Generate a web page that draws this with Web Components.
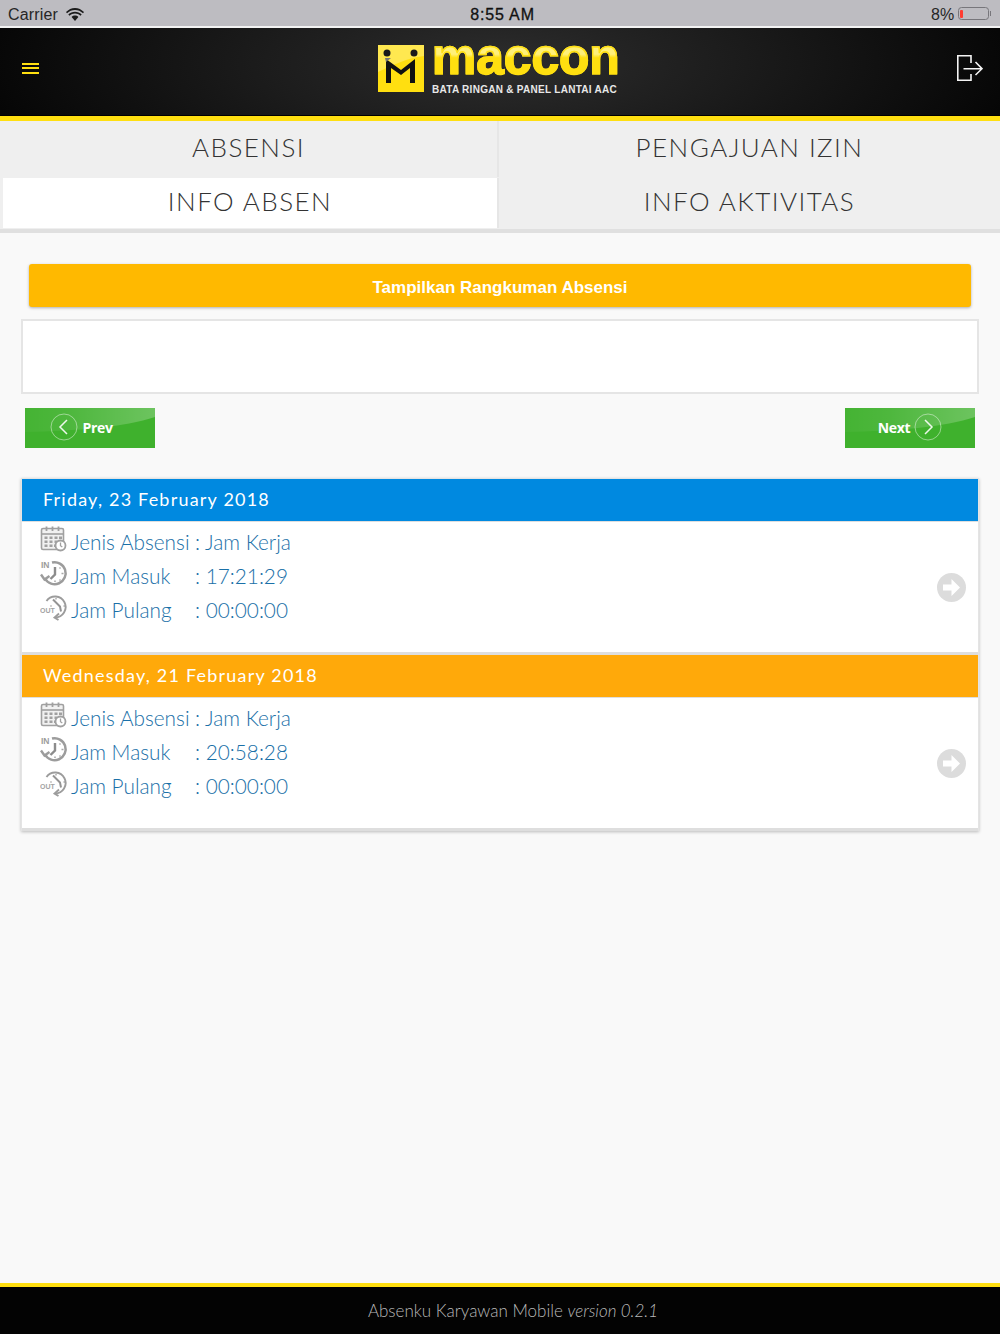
<!DOCTYPE html>
<html>
<head>
<meta charset="utf-8">
<title>Absenku</title>
<style>
html,body{margin:0;padding:0;height:100%;}
body{font-family:"Lato","Liberation Sans",sans-serif;background:#f9f9f9;}
#app{display:flex;flex-direction:column;height:1334px;overflow:hidden;}
</style>
</head>
<body>
<div id="app">
    <app-statusbar></app-statusbar>
    <app-header></app-header>
    <tab-grid>
        <tab-item>ABSENSI</tab-item>
        <tab-item>PENGAJUAN IZIN</tab-item>
        <tab-item active>INFO ABSEN</tab-item>
        <tab-item>INFO AKTIVITAS</tab-item>
    </tab-grid>
    <app-main>
        <action-button>Tampilkan Rangkuman Absensi</action-button>
        <summary-box></summary-box>
        <pager-bar>
            <pager-button dir="prev">Prev</pager-button>
            <pager-button dir="next">Next</pager-button>
        </pager-bar>
        <card-list>
            <absen-card date="Friday, 23 February 2018" color="#0089e0" type="Jam Kerja" masuk="17:21:29" pulang="00:00:00"></absen-card>
            <absen-card date="Wednesday, 21 February 2018" color="#ffa90a" type="Jam Kerja" masuk="20:58:28" pulang="00:00:00"></absen-card>
        </card-list>
    </app-main>
    <app-footer>Absenku Karyawan Mobile <em>version 0.2.1</em></app-footer>
</div>

<script>
const icons = {
    calendar: `<svg width="28" height="28" viewBox="0 0 28 28" fill="none" stroke="#a0a0a0">
        <rect x="1.500" y="3.500" width="22" height="21" rx="1.500" fill="#f1f1f1" stroke-width="1.600"/>
        <path d="M1.500 9H23.500" stroke-width="1.600"/>
        <path d="M6.500 1.500V6M12.500 1.500V6M18.500 1.500V6" stroke-width="1.800"/>
        <path d="M4.500 11.500h3v2.500h-3zM9.500 11.500h3v2.500h-3zM14.500 11.500h3v2.500h-3zM19 11.500h3v2.500h-3zM4.500 15.500h3v2.500h-3zM9.500 15.500h3v2.500h-3zM14.500 15.500h3v2.500h-3zM4.500 19.500h3v2.500h-3zM9.500 19.500h3v2.500h-3zM14 19.500h2v2.500h-2z" fill="#a0a0a0" stroke="none"/>
        <circle cx="20.500" cy="20.500" r="5" fill="#fff" stroke-width="1.800"/>
        <path d="M20.500 17.500V20.700L22.300 22" stroke-width="1.300"/>
    </svg>`,
    clockin: `<svg width="28" height="28" viewBox="0 0 28 28" fill="none">
        <text x="1" y="9" font-family="Liberation Sans" font-weight="700" font-size="8.500" fill="#9c9c9c">IN</text>
        <path d="M12 3.500A11 11 0 1 1 5 19.500" stroke="#9c9c9c" stroke-width="2.500"/>
        <path d="M1 15.500L4.500 20.500L9.500 17" stroke="#9c9c9c" stroke-width="2.400"/>
        <path d="M15 8V15.500L10.500 20" stroke="#8c8c8c" stroke-width="2.400"/>
        <path d="M21.500 14.500h2M19.500 20.500l1 1M15 21.500v1.500M20.500 8.500l-1 1" stroke="#a6a6a6" stroke-width="1.500"/>
    </svg>`,
    clockout: `<svg width="28" height="28" viewBox="0 0 28 28" fill="none">
        <path d="M6.500 8A10.500 10.500 0 1 1 15 24.500" stroke="#9c9c9c" stroke-width="1.900"/>
        <path d="M19 20.500L14.500 24.500L18.500 27" stroke="#9c9c9c" stroke-width="1.900"/>
        <path d="M13 6.500L20 13.500L21 18.500" stroke="#949494" stroke-width="2"/>
        <path d="M16 5v1.500M23.500 13h1.500M10.500 12.500l1 1" stroke="#a6a6a6" stroke-width="1.400"/>
        <text x="0" y="20" font-family="Liberation Sans" font-weight="700" font-size="7" fill="#a3a3a3">OUT</text>
    </svg>`
};

class AppStatusbar extends HTMLElement {
    constructor() {
        super();
        const shadowRoot = this.attachShadow({ mode: 'open' });
        shadowRoot.innerHTML = `
        <style>
        :host{
            display:grid;
            grid-template-columns:1fr auto 1fr;
            align-items:center;
            height:23px;
            padding:3px 9px 0 8px;
            background:#bdbcc1;
            border-bottom:2px solid #f2f2f2;
            font-family:"Liberation Sans",Arial,sans-serif;
            font-size:16px;
            letter-spacing:.15px;
            color:#262626;
            box-sizing:content-box;
        }
        .left{display:flex;align-items:center;gap:8px;}
        .time{color:#111;-webkit-text-stroke:.3px #111;letter-spacing:.85px;position:relative;left:3px;}
        .right{display:flex;align-items:center;justify-content:flex-end;gap:3px;}
        .batt{display:flex;align-items:center;gap:1px;position:relative;top:-1px;}
        .shell{width:26px;height:8px;border:1.500px solid #77767b;border-radius:3.500px;padding:1.500px;box-sizing:content-box;}
        .level{width:2.500px;height:100%;background:#ff3b30;border-radius:1px;}
        .nub{width:1.500px;height:5px;background:#77767b;}
        </style>
        <div class="left">
            <span>Carrier</span>
            <svg width="18" height="13" viewBox="0 0 18 13" fill="#1c1c1c">
                <path d="M9 2C6 2 3.200 3.200 1 5.300L0 4.100C2.400 1.600 5.600 0 9 0s6.600 1.600 9 4.100l-1 1.200C14.800 3.200 12 2 9 2z"/>
                <path d="M9 5.500C7 5.500 5 6.300 3.500 7.700L2.300 6.400C4.200 4.700 6.500 3.700 9 3.700s4.800 1 6.700 2.700l-1.200 1.300C13 6.300 11 5.500 9 5.500z"/>
                <path d="M9 7.500c1.300 0 2.500.5 3.400 1.400L9 13 5.600 8.900C6.500 8 7.700 7.500 9 7.500z"/>
            </svg>
        </div>
        <div class="time">8:55 AM</div>
        <div class="right">
            <span>8%</span>
            <div class="batt"><div class="shell"><div class="level"></div></div><div class="nub"></div></div>
        </div>
        `
    }
}
customElements.define('app-statusbar', AppStatusbar);

class AppHeader extends HTMLElement {
    constructor() {
        super();
        const shadowRoot = this.attachShadow({ mode: 'open' });
        shadowRoot.innerHTML = `
        <style>
        :host{
            display:flex;
            align-items:center;
            justify-content:space-between;
            height:80px;
            padding:0 17px 8px 22px;
            background:radial-gradient(ellipse 520px 170px at 50% 40%,#2d2d2d 0%,#1c1c1c 45%,#060606 100%);
            border-bottom:5px solid #ffdf10;
            box-shadow:inset 0 -1px 0 #000;
        }
        .menu{display:flex;flex-direction:column;gap:2.500px;width:17px;}
        .menu i{display:block;height:2px;background:#ffdf10;}
        .logo{display:flex;align-items:flex-start;gap:8px;margin:4px 0 0;}
        .mark{display:block;}
        .words{display:flex;flex-direction:column;align-items:flex-start;width:186px;}
        .name{
            font-family:"Liberation Sans",Arial,sans-serif;
            font-weight:700;
            font-size:52px;
            line-height:36px;
            height:36px;
            margin-top:-7px;
            -webkit-text-stroke:1.500px #ffdf10;
            color:transparent;
            background:linear-gradient(#fff07a 0,#fff07a 45%,#ffdf10 55%);
            -webkit-background-clip:text;
            background-clip:text;
            transform:scaleX(.955);
            transform-origin:0 0;
            white-space:nowrap;
        }
        .tag{
            font-family:"Liberation Sans",Arial,sans-serif;
            font-weight:700;
            font-size:10px;
            letter-spacing:.28px;
            color:#e8e8e8;
            margin-top:9.500px;
            white-space:nowrap;
        }
        </style>
        <div class="menu"><i></i><i></i><i></i></div>
        <div class="logo">
            <svg class="mark" width="46" height="47" viewBox="0 0 46 47">
                <rect width="46" height="47" fill="#ffdf10"/>
                <path d="M0 0H46V11C30 13 14 20 0 27z" fill="#ffe850"/>
                <circle cx="9" cy="8" r="3.500" fill="#1a1a1a"/>
                <circle cx="36" cy="8" r="3.500" fill="#1a1a1a"/>
                <path d="M8 38V14L23 25L37 14V38H32V23L23 30L13 23V38z" fill="#111"/>
                <path d="M7 13H13L8 17z" fill="#777"/>
            </svg>
            <div class="words">
                <div class="name">maccon</div>
                <div class="tag">BATA RINGAN &amp; PANEL LANTAI AAC</div>
            </div>
        </div>
        <svg width="26" height="26" viewBox="0 0 26 26" fill="none" stroke="#f4f4f4" stroke-width="1.600">
            <path d="M14 8V.8H.8V25.200H14V19"/>
            <path d="M6.500 13.700H25M18.500 7L25 13.700L18.500 20"/>
        </svg>
        `
    }
}
customElements.define('app-header', AppHeader);

class TabGrid extends HTMLElement {
    constructor() {
        super();
        const shadowRoot = this.attachShadow({ mode: 'open' });
        shadowRoot.innerHTML = `
        <style>
        :host{
            display:grid;
            grid-template-columns:499px 501px;
            grid-template-rows:56px 52px;
            background:#efefef;
            border-bottom:4px solid #e0e0e0;
            height:108px;
        }
        </style>
        <slot></slot>
        `
    }
}
customElements.define('tab-grid', TabGrid);

class TabItem extends HTMLElement {
    constructor() {
        super();
        const shadowRoot = this.attachShadow({ mode: 'open' });
        shadowRoot.innerHTML = `
        <style>
        :host{
            display:flex;
            align-items:center;
            justify-content:center;
            padding-bottom:4px;
            font-family:"Lato",sans-serif;
            font-weight:300;
            font-size:26px;
            letter-spacing:1.450px;
            color:#333;
            background:#efefef;
            box-sizing:border-box;
        }
        :host(:nth-child(odd)){
            border-right:2px solid #e6e6e6;
        }
        :host([active]){
            background:#fff;
            margin-left:3px;
            margin-top:1px;
            margin-bottom:1px;
            padding-bottom:5px;
        }
        </style>
        <slot></slot>
        `
    }
}
customElements.define('tab-item', TabItem);

class AppMain extends HTMLElement {
    constructor() {
        super();
        const shadowRoot = this.attachShadow({ mode: 'open' });
        shadowRoot.innerHTML = `
        <style>
        :host{
            display:flex;
            flex-direction:column;
            flex:1;
            padding:31px 21px 0;
            background:#f9f9f9;
            min-height:0;
        }
        </style>
        <slot></slot>
        `
    }
}
customElements.define('app-main', AppMain);

class ActionButton extends HTMLElement {
    constructor() {
        super();
        const shadowRoot = this.attachShadow({ mode: 'open' });
        shadowRoot.innerHTML = `
        <style>
        :host{
            display:flex;
            align-items:center;
            justify-content:center;
            height:43px;
            box-sizing:border-box;
            padding-top:4px;
            margin:0 8px 12px;
            background:#ffb900;
            border-radius:3px;
            box-shadow:0 1px 3px rgba(0,0,0,.3);
            color:#fff;
            font-family:"Liberation Sans",Arial,sans-serif;
            font-weight:700;
            font-size:17px;
        }
        </style>
        <slot></slot>
        `
    }
}
customElements.define('action-button', ActionButton);

class SummaryBox extends HTMLElement {
    constructor() {
        super();
        const shadowRoot = this.attachShadow({ mode: 'open' });
        shadowRoot.innerHTML = `
        <style>
        :host{
            display:block;
            height:75px;
            box-sizing:border-box;
            background:#fff;
            border:2px solid #e5e5e5;
        }
        </style>
        `
    }
}
customElements.define('summary-box', SummaryBox);

class PagerBar extends HTMLElement {
    constructor() {
        super();
        const shadowRoot = this.attachShadow({ mode: 'open' });
        shadowRoot.innerHTML = `
        <style>
        :host{
            display:flex;
            justify-content:space-between;
            padding:14px 4px 0;
        }
        </style>
        <slot></slot>
        `
    }
}
customElements.define('pager-bar', PagerBar);

class PagerButton extends HTMLElement {
    constructor() {
        super();
        const isNext = this.getAttribute('dir') === 'next';
        const shadowRoot = this.attachShadow({ mode: 'open' });
        shadowRoot.innerHTML = `
        <style>
        :host{
            display:flex;
            align-items:center;
            justify-content:center;
            position:relative;
            overflow:hidden;
            width:130px;
            height:40px;
            padding-bottom:2px;
            box-sizing:border-box;
            background:#3fb12d;
            color:#fff;
            font-family:"Open Sans",sans-serif;
            font-weight:700;
            font-size:14px;
            letter-spacing:-.3px;
        }
        :host([dir="prev"]){
            padding-right:17px;
        }
        .gloss{position:absolute;left:0;top:0;}
        .inner{position:relative;display:flex;align-items:center;gap:4px;}
        </style>
        <svg class="gloss" width="130" height="40" viewBox="0 0 130 40">
            <defs><linearGradient id="g" x1="0" x2="1" y1="0" y2="0">
                <stop offset="0" stop-color="#fff" stop-opacity=".03"/>
                <stop offset=".35" stop-color="#fff" stop-opacity=".08"/>
                <stop offset="1" stop-color="#fff" stop-opacity=".24"/>
            </linearGradient></defs>
            <path d="M0 0H130V9C100 19 50 23 0 24z" fill="url(#g)"/>
        </svg>
        <div class="inner">
            ${isNext ? '<slot></slot>' : ''}
            <svg width="28" height="28" viewBox="0 0 28 28" fill="none">
                <circle cx="14" cy="14" r="13" stroke="#fff" stroke-opacity=".45" stroke-width="1"/>
                <path d="${isNext ? 'M11 7L18 14L11 21' : 'M17 7L10 14L17 21'}" stroke="#fff" stroke-width="1.500" stroke-opacity=".9"/>
            </svg>
            ${isNext ? '' : '<slot></slot>'}
        </div>
        `
    }
}
customElements.define('pager-button', PagerButton);

class CardList extends HTMLElement {
    constructor() {
        super();
        const shadowRoot = this.attachShadow({ mode: 'open' });
        shadowRoot.innerHTML = `
        <style>
        :host{
            display:flex;
            flex-direction:column;
            margin-top:30px;
            box-sizing:border-box;
            border:1px solid #e4e4e4;
            border-bottom:0;
            box-shadow:0 1px 3px rgba(0,0,0,.25);
            background:#fff;
        }
        </style>
        <slot></slot>
        `
    }
}
customElements.define('card-list', CardList);

class InfoRow extends HTMLElement {
    constructor() {
        super();
        const shadowRoot = this.attachShadow({ mode: 'open' });
        shadowRoot.innerHTML = `
        <style>
        :host{
            display:grid;
            grid-template-columns:28px 121px auto;
            column-gap:3px;
            align-items:center;
            height:34px;
            font-family:"Lato",sans-serif;
            font-weight:300;
            font-size:20.800px;
            color:#1a70a8;
            white-space:nowrap;
        }
        svg{display:block;margin-top:-4px;}
        .ico{display:flex;}
        </style>
        <span class="ico">${icons[this.getAttribute('icon')]}</span>
        <span>${this.getAttribute('label')}</span>
        <span>: ${this.getAttribute('value')}</span>
        `
    }
}
customElements.define('info-row', InfoRow);

class AbsenCard extends HTMLElement {
    constructor() {
        super();
        const shadowRoot = this.attachShadow({ mode: 'open' });
        shadowRoot.innerHTML = `
        <style>
        :host{
            display:block;
            height:176px;
            box-sizing:border-box;
            border-bottom:3px solid #dedede;
            background:#fff;
        }
        .head{
            height:43px;
            display:flex;
            align-items:center;
            padding:0 0 2px 21px;
            background:${this.getAttribute('color')};
            color:#fff;
            font-family:"Lato",sans-serif;
            font-size:18px;
            letter-spacing:1.200px;
            border-bottom:1px solid #dedede;
            box-sizing:border-box;
        }
        .body{
            display:flex;
            align-items:center;
            justify-content:space-between;
            padding:2px 12px 0 18px;
            height:130px;
            box-sizing:border-box;
        }
        .rows{align-self:flex-start;}
        .go{margin-top:-2px;}
        </style>
        <div class="head">${this.getAttribute('date')}</div>
        <div class="body">
            <div class="rows">
                <info-row icon="calendar" label="Jenis Absensi" value="${this.getAttribute('type')}"></info-row>
                <info-row icon="clockin" label="Jam Masuk" value="${this.getAttribute('masuk')}"></info-row>
                <info-row icon="clockout" label="Jam Pulang" value="${this.getAttribute('pulang')}"></info-row>
            </div>
            <svg class="go" width="29" height="29" viewBox="0 0 29 29">
                <circle cx="14.500" cy="14.500" r="14.500" fill="#dcdcdc"/>
                <path d="M6 11.500H14.500V6L23 14.500L14.500 23V17.500H6z" fill="#fff"/>
            </svg>
        </div>
        `
    }
}
customElements.define('absen-card', AbsenCard);

class AppFooter extends HTMLElement {
    constructor() {
        super();
        const shadowRoot = this.attachShadow({ mode: 'open' });
        shadowRoot.innerHTML = `
        <style>
        :host{
            display:flex;
            align-items:center;
            justify-content:center;
            height:47px;
            padding-left:26px;
            background:#030303;
            border-top:4px solid #ffdf10;
            color:#b8b8b8;
            font-family:"Lato",sans-serif;
            font-weight:300;
            font-size:17px;
            white-space:pre;
        }
        </style>
        <slot></slot>
        `
    }
}
customElements.define('app-footer', AppFooter);
</script>
</body>
</html>
